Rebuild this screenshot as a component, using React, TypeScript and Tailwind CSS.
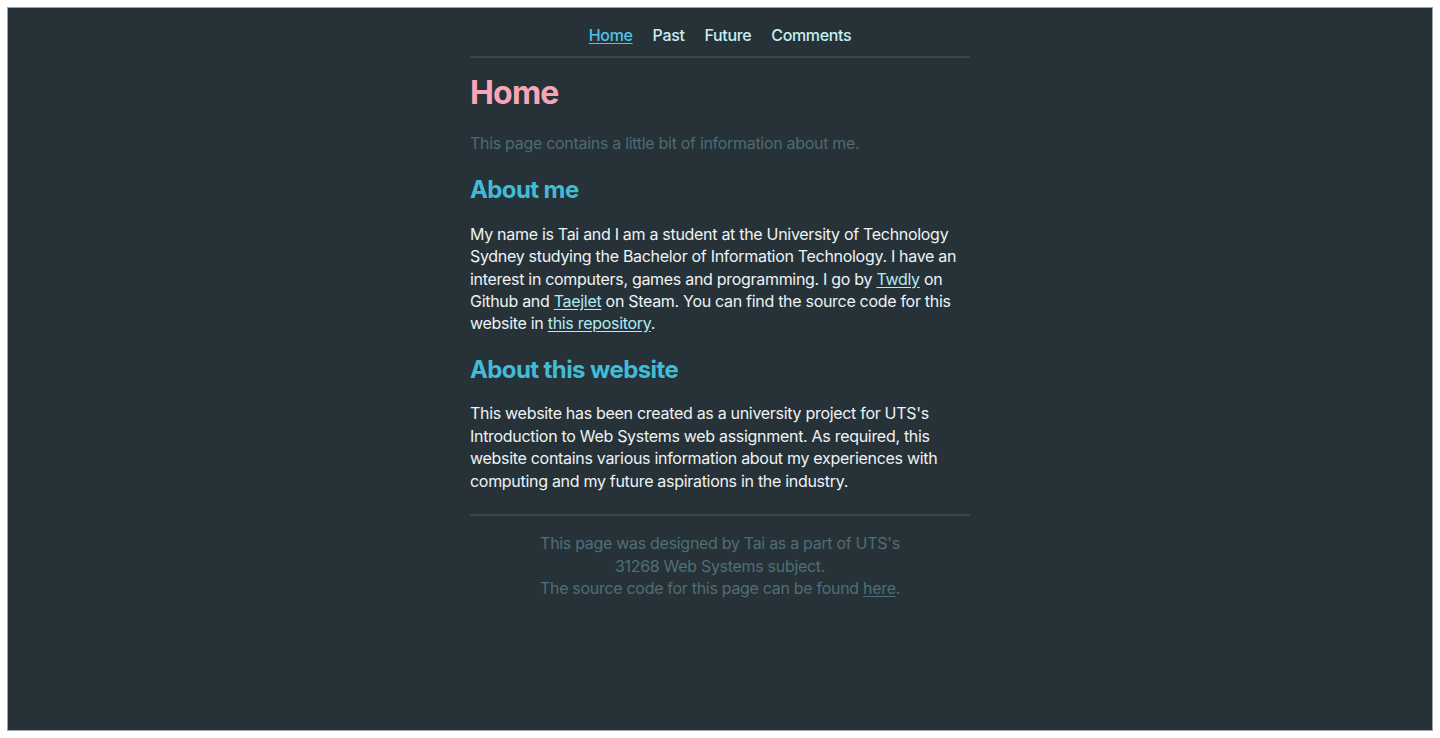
import React from 'react';

const navLinks = ['Home', 'Past', 'Future', 'Comments'];

export default function App() {
  return (
    <div className="min-h-screen bg-white p-[7px] font-['Inter',sans-serif]">
      <div className="h-[724px] border border-[#9aa4a9] bg-[#263238]">
        <div className="mx-auto w-[500px]">
          {/* Navigation */}
          <nav className="flex justify-center gap-5 pt-4 pb-[10px] text-base font-medium leading-[22px] tracking-[-0.35px]">
            {navLinks.map((link) => (
              <a
                key={link}
                href="#"
                className={
                  link === 'Home'
                    ? 'text-[#4fc3e6] underline underline-offset-2'
                    : 'text-[#c8eef4]'
                }
              >
                {link}
              </a>
            ))}
          </nav>
          <hr className="border-t-2 border-[#37474f]" />

          <h1 className="mt-[15px] text-[32px] font-bold leading-[40px] tracking-tight text-[#f8a6b7]">Home</h1>
          <p className="mt-[19px] text-base leading-[22px] tracking-[-0.3px] text-[#4d6b73]">
            This page contains a little bit of information about me.
          </p>

          <h2 className="mt-[20px] text-2xl font-bold leading-8 tracking-tight text-[#42bcd6]">About me</h2>
          <p className="mt-[17px] text-base leading-[22.3px] tracking-[-0.3px] text-[#eef3f5]">
            My name is Tai and I am a student at the University of Technology Sydney studying the Bachelor of
            Information Technology. I have an interest in computers, games and programming. I go by{' '}
            <a href="#" className="text-[#b2ebf2] underline underline-offset-2">Twdly</a> on Github and{' '}
            <a href="#" className="text-[#b2ebf2] underline underline-offset-2">Taejlet</a> on Steam. You can find the
            source code for this website in{' '}
            <a href="#" className="text-[#b2ebf2] underline underline-offset-2">this repository</a>.
          </p>

          <h2 className="mt-[20px] text-2xl font-bold leading-8 tracking-tight text-[#42bcd6]">About this website</h2>
          <p className="mt-[16px] text-base leading-[22.5px] tracking-[-0.3px] text-[#eef3f5]">
            This website has been created as a university project for UTS's Introduction to Web Systems web
            assignment. As required, this website contains various information about my experiences with computing
            and my future aspirations in the industry.
          </p>

          <hr className="mt-[22px] border-t-2 border-[#37474f]" />

          {/* Footer */}
          <footer className="mx-auto mt-4 w-[380px] text-center text-base leading-[22.5px] tracking-[-0.3px] text-[#4f6e77]">
            <p>This page was designed by Tai as a part of UTS's 31268 Web Systems subject.</p>
            <p>
              The source code for this page can be found{' '}
              <a href="#" className="underline underline-offset-2">here</a>.
            </p>
          </footer>
        </div>
      </div>
    </div>
  );
}
